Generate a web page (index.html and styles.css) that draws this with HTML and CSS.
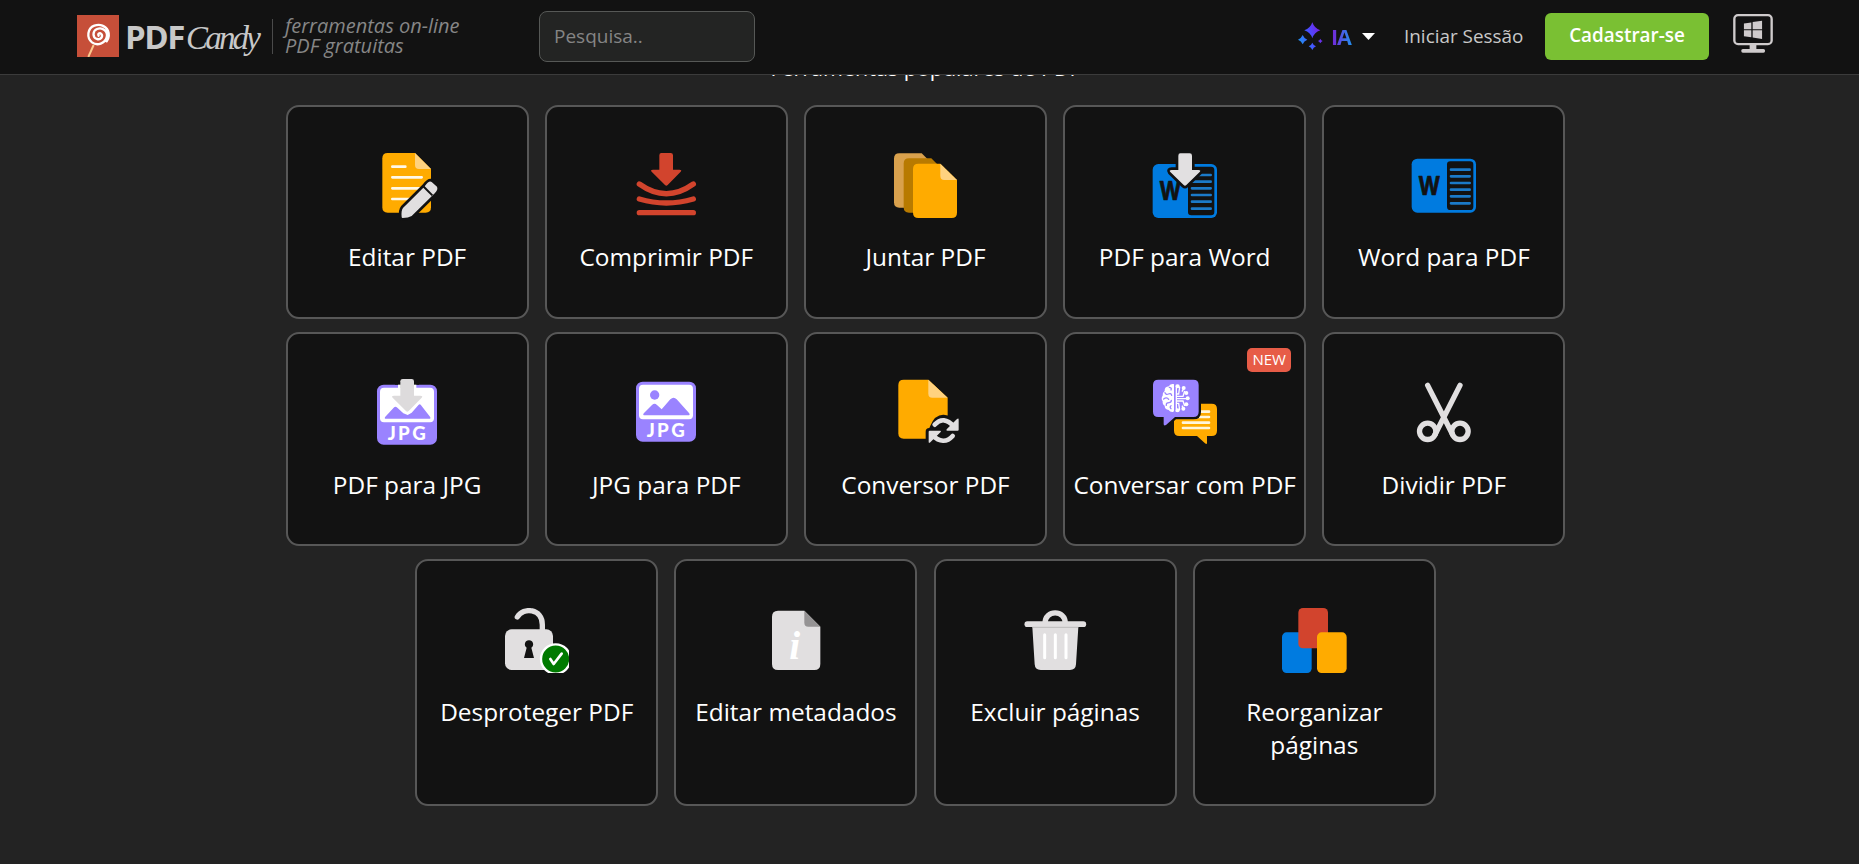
FILE: index.html
```html
<!DOCTYPE html>
<html lang="pt">

<head>
  <meta charset="UTF-8">
  <title>PDF Candy - ferramentas on-line PDF gratuitas</title>
  <link rel="stylesheet" href="styles.css">
</head>

<body>
  <header class="header">
    <a class="logo">
      <svg class="logo-mark" viewBox="0 0 126 126">
        <rect width="126" height="126" fill="#c64f39" />
        <path d="M50 90L34 126" stroke="#fbc98e" stroke-width="6" />
        <path d="M65 62c-4-5 3-10 8-5c6 8-2 18-13 15c-14-5-14-24 0-30c17-7 34 8 29 25c-5 18-28 27-44 15c-17-14-14-42 7-50c17-6 34 0 41 15c5 13 2 24-4 32" fill="none" stroke="#fff" stroke-width="7" stroke-linecap="round" />
      </svg>
      <span class="logo-pdf">PDF</span>
      <span class="logo-candy">Candy</span>
    </a>
    <div class="tagline">ferramentas on-line<br>PDF gratuitas</div>
    <input class="search" type="text" placeholder="Pesquisa..">

    <nav class="nav">
      <a class="ai-menu">
        <svg class="ai-icon" viewBox="0 0 75 84">
          <defs>
            <linearGradient id="aiGradient" gradientUnits="userSpaceOnUse" x1="0" y1="60" x2="72" y2="30">
              <stop offset="0" stop-color="#1e96f0" />
              <stop offset=".55" stop-color="#4b4cff" />
              <stop offset="1" stop-color="#7a1fe0" />
            </linearGradient>
          </defs>
          <path fill="url(#aiGradient)" d="M43 1Q49 19 67 25Q49 31 43 49Q37 31 19 25Q37 19 43 1ZM14 39Q18 49 28 53Q18 57 14 67Q10 57 0 53Q10 49 14 39ZM43 62Q46 70 54 73Q46 76 43 84Q40 76 32 73Q40 70 43 62ZM67 50Q69 55 74 57Q69 59 67 64Q65 59 60 57Q65 55 67 50Z" />
        </svg>
        <span class="ai-text">IA</span>
        <span class="caret"></span>
      </a>
      <a class="login">Iniciar Sessão</a>
      <a class="signup">Cadastrar-se</a>
      <svg class="desktop-icon" viewBox="0 0 118 116">
        <rect x="3.5" y="3.5" width="111" height="86" rx="11" fill="none" stroke="#cfcbcc" stroke-width="7" />
        <path fill="#cfcbcc" d="M49 90h20v14h-20zM29 104h61q5 0 5 5.500t-5 5.500H29q-5 0-5-5.500t5-5.500zM32 28l22-3v20H32zM58 24l28-4v25H58zM32 48h22v21l-22-3zM58 48h28v26l-28-4z" />
      </svg>
    </nav>
  </header>

  <main class="tools">
    <h2 class="tools-title">Ferramentas populares de PDF</h2>
    <div class="tools-grid">
      <a class="card">
        <svg class="card-icon" viewBox="0 0 195 195">
          <path fill="#ffab00" d="M38 0h82l48 48v115q0 16-16 16H38q-16 0-16-16V16Q22 0 38 0z" />
          <path fill="#ffd27f" d="M120 0l48 48h-36q-12 0-12-12z" />
          <path stroke="#fff8e8" stroke-width="8" stroke-linecap="round" d="M52 41h39M52 73h88M52 106h80M52 138h60" />
          <path fill="#e1dfe0" stroke="#121212" stroke-width="16" stroke-linejoin="round" paint-order="stroke" d="M80 192q-2-20 4-27L148 101q14-20 22-14l16 14q4 8-6 19L110 189q-10 6-27 6q-3 0-3-3z" />
          <path stroke="#121212" stroke-width="6" d="M144 99l28 28" />
        </svg>
        <span class="card-title">Editar PDF</span>
      </a>
      <a class="card">
        <svg class="card-icon" viewBox="0 0 195 195">
          <path fill="#d2442d" d="M82 0h28q7 0 7 7v43h19q9 0 4 6L101 96q-4 4-8 0L53 56q-5-6 4-6h19V7q0-7 6-7z" />
          <path fill="none" stroke="#d2442d" stroke-width="16" stroke-linecap="round" d="M16 93Q97 151 178 93M16 138Q97 162 178 138M16 179H178" />
        </svg>
        <span class="card-title">Comprimir PDF</span>
      </a>
      <a class="card">
        <svg class="card-icon" viewBox="0 0 195 195">
          <path fill="#d9a14d" d="M19 1h67l48 48v99q0 16-16 16H19q-16 0-16-16V17Q3 1 19 1z" />
          <path fill="#b87a00" d="M48 16h67l48 48v99q0 16-16 16H48q-16 0-16-16V32q0-16 16-16z" />
          <path fill="#ffab00" d="M76 32h66l50 49v98q0 16-16 16H76q-16 0-16-16V48q0-16 16-16z" />
          <path fill="#ffd27f" d="M142 32l50 49h-38q-12 0-12-12z" />
        </svg>
        <span class="card-title">Juntar PDF</span>
      </a>
      <a class="card">
        <svg class="card-icon" viewBox="0 0 195 195">
          <rect x="2" y="33" width="193" height="162" rx="17" fill="#007be0" />
          <rect x="108" y="41" width="79" height="146" rx="10" fill="#121212" />
          <path stroke="#1b7ac8" stroke-width="8" stroke-linecap="round" d="M120 66h56M120 86h56M120 106h56M120 126h56M120 146h56M120 167h56" />
          <text class="word-letter" x="22" y="142" textLength="66" lengthAdjust="spacingAndGlyphs">W</text>
          <path fill="#e2e0e1" stroke="#121212" stroke-width="16" stroke-linejoin="round" paint-order="stroke" d="M85 1h28q7 0 7 7v43h19q9 0 4 6L103 96q-4 4-8 0L55 57q-5-6 4-6h20V8q0-7 6-7z" />
        </svg>
        <span class="card-title">PDF para Word</span>
      </a>
      <a class="card">
        <svg class="card-icon" viewBox="0 0 195 195">
          <rect x="2" y="17" width="193" height="162" rx="17" fill="#007be0" />
          <rect x="108" y="25" width="79" height="146" rx="10" fill="#121212" />
          <path stroke="#1b7ac8" stroke-width="8" stroke-linecap="round" d="M120 50h56M120 70h56M120 90h56M120 110h56M120 130h56M120 151h56" />
          <text class="word-letter" x="22" y="126" textLength="66" lengthAdjust="spacingAndGlyphs">W</text>
        </svg>
        <span class="card-title">Word para PDF</span>
      </a>
    </div>

    <div class="tools-grid middle-row">
      <a class="card">
        <svg class="card-icon" viewBox="0 0 195 195">
          <rect x="6" y="17" width="180" height="180" rx="20" fill="#9a83ff" />
          <rect x="15" y="26" width="162" height="104" rx="12" fill="#fff" />
          <path fill="#9a83ff" d="M34 119q-8 0-3-6l25-27q5-5 11 0l18 17l13 5l12-7l21-24q3-3 6 0l28 36q4 6-3 6z" />
          <text class="jpg-letters" x="38" y="183" textLength="114">JPG</text>
          <path fill="#dddbdc" stroke="#fff" stroke-width="14" stroke-linejoin="round" paint-order="stroke" d="M82 14h28l7-6v42h19q9 0 4 6L101 96q-4 4-8 0L53 56q-5-6 4-6h19V14z" />
          <path fill="#121212" d="M60 0h72v17H60z" />
          <path fill="#dddbdc" d="M83 0h27q7 0 7 7v20H76V7q0-7 7-7z" />
        </svg>
        <span class="card-title">PDF para JPG</span>
      </a>
      <a class="card">
        <svg class="card-icon" viewBox="0 0 195 195">
          <rect x="6" y="8" width="180" height="180" rx="20" fill="#9a83ff" />
          <rect x="15" y="17" width="162" height="104" rx="12" fill="#fff" />
          <circle cx="62" cy="48" r="14" fill="#9a83ff" />
          <path fill="#9a83ff" d="M33 109q-9 0-3-7l24-24q8-8 15 0l14 13l26-30q10-10 19 0l37 41q5 7-3 7z" />
          <text class="jpg-letters" x="38" y="174" textLength="114">JPG</text>
        </svg>
        <span class="card-title">JPG para PDF</span>
      </a>
      <a class="card">
        <svg class="card-icon" viewBox="0 0 195 195">
          <path fill="#ffab00" d="M32 2h74l58 54v107q0 16-16 16H32q-16 0-16-16V18Q16 2 32 2z" />
          <path fill="#ffd27f" d="M106 2l58 54h-46q-12 0-12-12z" />
          <path fill="#121212" d="M112 140Q126 106 152 107Q165 107 176 115V195H98V158q0-11 11-11z" />
          <path fill="none" stroke="#e1dfe0" stroke-width="14" stroke-linecap="round" d="M125 137Q152 108 183 143M179 171Q152 201 117 168" />
          <path fill="#e1dfe0" d="M197 122v30q0 3-3 3h-31q-5 0-2-4l31-31q5-4 5 2zM107 158q0-3 3-3h31q5 0 2 4l-31 31q-5 4-5-2z" />
        </svg>
        <span class="card-title">Conversor PDF</span>
      </a>
      <a class="card">
        <span class="badge">NEW</span>
        <svg class="card-icon" viewBox="0 0 195 195">
          <path fill="#ffab00" d="M82 74h97q16 0 16 16v65q0 16-16 16h-14v20q0 7-6 2l-24-22H82q-16 0-16-16V90q0-16 16-16z" />
          <path stroke="#fff6dc" stroke-width="8" stroke-linecap="round" d="M93 98h78M93 114h78M93 131h78M93 147h78" />
          <path fill="#9a83ff" stroke="#121212" stroke-width="14" paint-order="stroke" d="M19 2h105q16 0 16 16v80q0 16-16 16H69l-27 24q-7 4-7-3v-21H19Q3 114 3 98V18Q3 2 19 2z" />
          <path fill="#fff" d="M66 18q2-4-5-3q-9 1-10 7q-14 1-13 14q-8 6-6 14q-6 8 0 17q-1 10 6 13q0 11 12 13q4 7 13 6q4-1 3-5z" />
          <path fill="none" stroke="#9a83ff" stroke-width="4" stroke-linecap="round" d="M52 25q8 1 5 8M39 41q2 7 10 4q8-4 10 4M35 60q9-7 15 1M43 79q-1-8 8-8q7 0 7-7M57 89q-5-5 0-9" />
          <path fill="none" stroke="#fff" stroke-width="4" d="M73 17v82M73 45h7l3-21M73 52h20l5-16M73 59h32M73 66h20l5 15M73 73h7l3 20M90 38l5-9M90 80l5 9" />
          <g fill="#fff">
            <circle cx="77" cy="22" r="6" />
            <circle cx="95" cy="27" r="6" />
            <circle cx="103" cy="42" r="6" />
            <circle cx="107" cy="58" r="6" />
            <circle cx="103" cy="76" r="6" />
            <circle cx="94" cy="89" r="6" />
            <circle cx="77" cy="94" r="6" />
          </g>
        </svg>
        <span class="card-title">Conversar com PDF</span>
      </a>
      <a class="card">
        <svg class="card-icon" viewBox="0 0 195 195">
          <g fill="none" stroke="#e1dfe0" stroke-width="16" stroke-linecap="round">
            <path d="M50 19L124 165M147 19L73 165" />
            <circle cx="50" cy="157" r="24.500" />
            <circle cx="147" cy="157" r="24.500" />
          </g>
        </svg>
        <span class="card-title">Dividir PDF</span>
      </a>
    </div>

    <div class="tools-grid last-row">
      <a class="card">
        <svg class="card-icon clipped" viewBox="0 0 195 195">
          <path fill="none" stroke="#e1dfe0" stroke-width="16" stroke-linecap="round" d="M40 27C58-4 115 2 115 50v20" />
          <rect x="3" y="64" width="144" height="122" rx="20" fill="#e1dfe0" />
          <path fill="#121212" d="M75 97a12 12 0 0 1 7 22l8 31H60l8-31a12 12 0 0 1 7-22z" />
          <circle cx="155" cy="153" r="44" fill="#007a00" stroke="#fff" stroke-width="7" />
          <path fill="none" stroke="#fff" stroke-width="8" stroke-linecap="round" stroke-linejoin="round" d="M139 153l10 15l24-31" />
        </svg>
        <span class="card-title">Desproteger PDF</span>
      </a>
      <a class="card">
        <svg class="card-icon" viewBox="0 0 195 195">
          <path fill="#e1dfe0" d="M45 8h79l48 48v112q0 18-18 18H45q-18 0-18-18V26Q27 8 45 8z" />
          <path fill="#959394" d="M124 8l48 48h-36q-12 0-12-12z" />
          <text class="info-letter" x="79" y="153">i</text>
        </svg>
        <span class="card-title">Editar metadados</span>
      </a>
      <a class="card">
        <svg class="card-icon" viewBox="0 0 195 195">
          <path fill="none" stroke="#e1dfe0" stroke-width="16" d="M66 46C66 4 127 4 127 46" />
          <path fill="#e1dfe0" d="M28 57h138l-7 112q-1 17-18 17H53q-17 0-18-17z" />
          <path stroke="#e1dfe0" stroke-width="17" stroke-linecap="round" d="M13 48.500h168" />
          <path stroke="#a9a8a8" stroke-width="2" d="M28 58h138" />
          <path stroke="#fff" stroke-width="9" stroke-linecap="round" d="M65 80v69M97 80v69M129 80v69" />
        </svg>
        <span class="card-title">Excluir páginas</span>
      </a>
      <a class="card">
        <svg class="card-icon" viewBox="0 0 195 195">
          <rect x="0" y="73" width="89" height="122" rx="14" fill="#007be0" />
          <rect x="49" y="0" width="89" height="121" rx="14" fill="#d2442d" />
          <rect x="105" y="73" width="89" height="122" rx="14" fill="#ffab00" />
        </svg>
        <span class="card-title">Reorganizar páginas</span>
      </a>
    </div>
  </main>
</body>

</html>
```
FILE: styles.css
```css
* {
  box-sizing: border-box;
}

body {
  margin: 0;
  height: 100vh;
  overflow: hidden;
  background-color: #232323;
  color: #fff;
  font-family: 'Open Sans', 'Noto Sans', sans-serif;
}

.header {
  position: fixed;
  top: 0;
  left: 0;
  right: 0;
  z-index: 10;
  height: 75px;
  padding: 0 86px 0 77px;
  display: flex;
  align-items: flex-start;
  background-color: #121212;
  border-bottom: 1px solid #3b3b3b;
}

.logo {
  display: flex;
  width: 195px;
  padding-top: 15px;
}

.logo-mark {
  width: 42px;
  height: 42px;
}

.logo-pdf {
  width: 61px;
  margin: -1px 0 0 6px;
  font-size: 33px;
  line-height: 45px;
  font-weight: bold;
  letter-spacing: -1.5px;
  color: #c8c8c8;
}

.logo-candy {
  padding-top: 2px;
  font-family: 'Liberation Serif', serif;
  font-style: italic;
  font-size: 33px;
  line-height: 42px;
  letter-spacing: -2.8px;
  color: #c8c8c8;
}

.tagline {
  width: 267px;
  height: 35px;
  margin-top: 19px;
  padding-left: 12px;
  border-left: 1px solid #4a4a4a;
  font-size: 20px;
  line-height: 20px;
  font-style: italic;
  white-space: nowrap;
  color: #868686;
}

.tagline::before {
  content: '';
  display: block;
  margin-top: -3px;
}

.search {
  width: 216px;
  height: 51px;
  margin-top: 11px;
  padding: 0 14px 2px;
  border: 1px solid #565856;
  border-radius: 8px;
  outline: none;
  background-color: #232423;
  color: #ccc;
  font-family: inherit;
  font-size: 19px;
}

.search::placeholder {
  color: #858585;
}

.nav {
  display: flex;
  margin-left: auto;
}

.ai-menu {
  display: flex;
  width: 106px;
}

.ai-icon {
  width: 25px;
  height: 28px;
  margin-top: 22px;
}

.ai-text {
  width: 22px;
  margin: 22px 0 0 8px;
  font-size: 21.5px;
  line-height: 29px;
  font-weight: bold;
  letter-spacing: -1px;
  background: linear-gradient(90deg, #7a1fd8, #1e96f0);
  -webkit-background-clip: text;
  background-clip: text;
  color: transparent;
}

.caret {
  width: 13px;
  height: 7px;
  margin: 33px 0 0 9px;
  background-color: #fff;
  clip-path: polygon(0 0, 100% 0, 50% 100%);
}

.login {
  width: 141px;
  margin-top: 23px;
  font-size: 18.9px;
  line-height: 27px;
  white-space: nowrap;
  color: #c8c8c8;
}

.signup {
  width: 164px;
  height: 47px;
  margin: 13px 24px 0 0;
  border-radius: 6px;
  background-color: #7ac033;
  font-size: 18.9px;
  line-height: 45px;
  font-weight: 600;
  text-align: center;
}

.desktop-icon {
  width: 40px;
  height: 39px;
  margin-top: 14px;
}

.tools {
  width: 1295px;
  margin-left: 278px;
  padding-top: 53px;
}

.tools-title {
  margin: 0;
  height: 51.6px;
  font-size: 21.5px;
  line-height: 30px;
  font-weight: 500;
  text-align: center;
}

.tools-grid {
  display: flex;
  justify-content: center;
  gap: 16.2px;
}

.middle-row,
.last-row {
  margin-top: 13.4px;
}

.card {
  position: relative;
  width: 243px;
  min-height: 214px;
  padding: 46px 4px 44px;
  border: 2px solid #575757;
  border-radius: 13px;
  background-color: #121212;
  display: flex;
  flex-direction: column;
  align-items: center;
}

.middle-row .card {
  padding: 45px 4px 43px;
}

.last-row .card {
  padding: 47px 4px 43px;
}

.card-icon {
  width: 65px;
  height: 65px;
  flex: none;
  overflow: visible;
}

.card-icon.clipped {
  overflow: hidden;
}

.card-title {
  margin-top: 22px;
  padding: 0 1px;
  font-size: 24.4px;
  line-height: 33px;
  text-align: center;
}

.middle-row .card-title {
  margin-top: 24px;
}

.last-row .card-title {
  max-width: 220px;
}

.badge {
  position: absolute;
  top: 14px;
  right: 13px;
  width: 44px;
  height: 24px;
  border-radius: 5px;
  background-color: #e75c47;
  font-size: 15px;
  line-height: 23px;
  text-align: center;
}

.word-letter {
  font-family: Inter, sans-serif;
  font-weight: bold;
  font-size: 76px;
  fill: #121212;
  stroke: #121212;
  stroke-width: 2px;
  stroke-linejoin: round;
}

.jpg-letters {
  font-family: Lato, sans-serif;
  font-weight: 900;
  font-size: 56px;
  fill: #fff;
}

.info-letter {
  font-family: 'Liberation Serif', serif;
  font-style: italic;
  font-weight: bold;
  font-size: 118px;
  fill: #fff;
}
```
